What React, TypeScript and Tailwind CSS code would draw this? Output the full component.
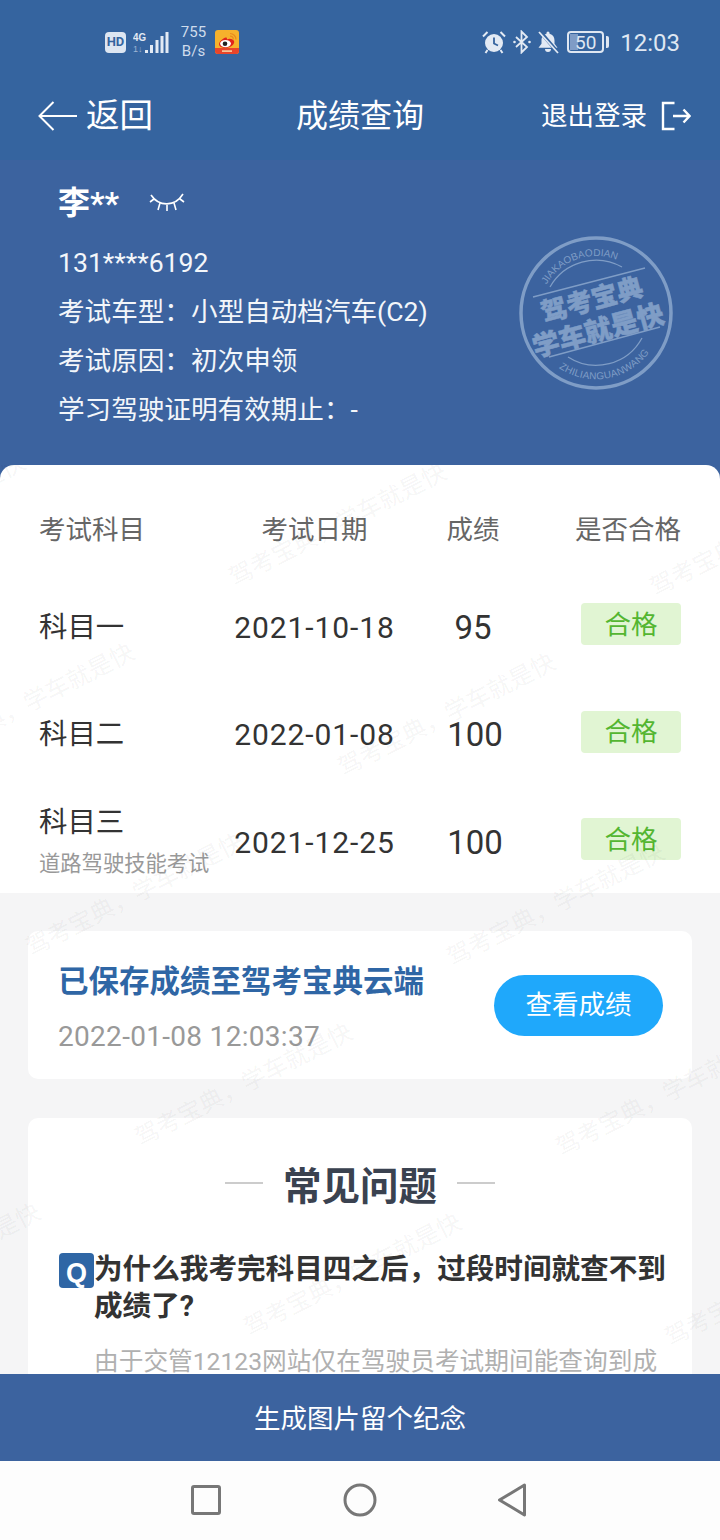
import React from "react";

const WM_A = { x: 109, y: 190 };
const WM_B = { x: 421, y: 10 };
const WATERMARKS: { x: number; y: number }[] = [];
for (let b = -2; b <= 2; b++) {
  for (let a = -2; a <= 6; a++) {
    WATERMARKS.push({ x: 236 + a * WM_A.x + b * WM_B.x, y: 590 + a * WM_A.y + b * WM_B.y });
  }
}

function StatusBar() {
  return (
    <div className="flex h-[84px] items-center pl-[105px] pr-[40px] text-[#dfe7f2]">
      <div className="flex h-[21px] w-[21px] items-center justify-center rounded-[4px] bg-[#dde6f2] text-[13px] font-bold text-[#35649f]">HD</div>
      <svg className="ml-[7px]" width="39" height="24" viewBox="0 0 39 24">
        <text x="0" y="11" fontSize="11.5" fontWeight="700" fill="#e3eaf4" fontFamily="Liberation Sans" textLength="13" lengthAdjust="spacingAndGlyphs">4G</text>
        <text x="0" y="22" fontSize="9" fill="#9db4d3" fontFamily="Liberation Sans">1↓</text>
        <g fill="#e3eaf4">
          <rect x="12" y="20" width="3" height="3" />
          <rect x="17" y="15" width="3" height="8" />
          <rect x="22.5" y="10" width="3" height="13" />
          <rect x="27.5" y="6" width="3" height="17" />
          <rect x="32.5" y="2" width="3" height="21" />
        </g>
      </svg>
      <div className="ml-[8px] flex w-[27px] flex-col items-center text-[15px] leading-[19px] text-[#cfdcec]">
        <span>755</span>
        <span>B/s</span>
      </div>
      <svg className="ml-[8px]" width="24" height="24" viewBox="0 0 24 24">
        <rect width="24" height="24" rx="3" fill="#f6b12c" />
        <path d="M0 18h24v3a3 3 0 0 1-3 3H3a3 3 0 0 1-3-3z" fill="#e8452a" />
        <path d="M17.5 9.500c2 1 2.500 3.500 0 5.800-3 2.700-7.500 3.500-11 2-3-1.300-3.200-4-.8-6.500 2.400-2.600 5-4 6-3 .5.600.2 1.600.2 1.600 1.800-.8 4-.9 5.600.100z" fill="#e0261c" />
        <ellipse cx="10.500" cy="13.600" rx="5.400" ry="3.700" fill="#fff" />
        <circle cx="10" cy="13.800" r="2.300" fill="#222" />
        <path d="M15 3.500a6 6 0 0 1 6 6M15 6.200a3.300 3.300 0 0 1 3.300 3.300" fill="none" stroke="#e98a1e" strokeWidth="1.200" />
        <rect x="7" y="20.300" width="10" height="1.600" fill="#f9d0a0" />
      </svg>
      <div className="flex-1" />
      <svg width="24" height="24" viewBox="0 0 24 24">
        <circle cx="12" cy="13" r="9" fill="#e3eaf4" />
        <path d="M12 7.500V13.500L16 15.500" fill="none" stroke="#35649f" strokeWidth="1.800" />
        <path d="M1 6.500 5.500 2M23 6.500 18.500 2M5.500 20 3.500 23M18.500 20l2 3" stroke="#e3eaf4" strokeWidth="2" fill="none" />
      </svg>
      <svg className="ml-[7px]" width="18" height="24" viewBox="0 0 18 24">
        <path d="M3 7 14 17 8.500 22.500V1.500L14 7 3 17" fill="none" stroke="#e3eaf4" strokeWidth="1.800" />
        <circle cx="1.500" cy="12" r="1.300" fill="#e3eaf4" />
        <circle cx="16.500" cy="12" r="1.300" fill="#e3eaf4" />
      </svg>
      <svg className="ml-[6px]" width="22" height="24" viewBox="0 0 22 24">
        <path d="M11 1.500a1.500 1.500 0 0 1 1.500 1.500v.7c3.500.8 5 3.500 5 7v3l3 4H1.500l3-4v-3c0-3.500 1.500-6.200 5-7V3A1.500 1.500 0 0 1 11 1.500zM8 19h6a3 3 0 0 1-6 0z" fill="#e3eaf4" />
        <path d="M3 1.500 21 22.500" stroke="#35649f" strokeWidth="3.500" />
        <path d="M2 2 21 23" stroke="#e3eaf4" strokeWidth="1.800" />
      </svg>
      <div className="relative ml-[8px] flex h-[22px] w-[37px] items-center justify-center overflow-hidden rounded-[4px] border-2 border-[#dfe7f2] text-[19px] leading-none">
        <div className="absolute bottom-[1px] left-[1px] top-[1px] w-[8px] bg-[#7f9cc6]" />
        <span className="relative">50</span>
      </div>
      <div className="ml-[2px] h-[12px] w-[3px] rounded-r-[2px] bg-[#dfe7f2]" />
      <div className="ml-[11px] pt-[2px] text-[24px] leading-none">12:03</div>
    </div>
  );
}

function NavBar() {
  return (
    <div className="relative flex h-[76px] items-center justify-between pb-[12px] pl-[38px] pr-[29px] text-white">
      <div className="flex items-center">
        <svg width="39" height="30" viewBox="0 0 39 30">
          <path d="M39 15H2M15.500 1 1.500 15 15.500 29" fill="none" stroke="#fff" strokeWidth="2" />
        </svg>
        <span className="ml-[9px] text-[33.500px] leading-none">返回</span>
      </div>
      <span className="absolute left-[296px] top-[12px] text-[32px] leading-[40px]">成绩查询</span>
      <div className="flex items-center">
        <span className="text-[26.5px] leading-none">退出登录</span>
        <svg className="ml-[14px]" width="30" height="30" viewBox="0 0 30 30">
          <path d="M13.500 2H2V28H13.500M12 15H28M22.500 8.500 28.500 15 22.500 21.500" fill="none" stroke="#fff" strokeWidth="2.400" />
        </svg>
      </div>
    </div>
  );
}

function Stamp() {
  return (
    <svg className="absolute left-[516px] top-[73px]" width="160" height="160" viewBox="0 0 160 160">
      <g fill="none" stroke="#7f9dc6">
        <circle cx="80" cy="80" r="75" strokeWidth="3.500" />
        <path d="M17 64 129 35M33 124 144 94" strokeWidth="1.300" />
        <path d="M34 54A53 53 0 0 1 106 34M52 124A52 52 0 0 0 126 105" strokeWidth="1.300" />
      </g>
      <defs>
        <path id="stamp-top" d="M30.600 51.500A57 57 0 0 1 123.700 43.400" />
        <path id="stamp-bottom" d="M43 135A66 66 0 0 0 145 91.500" />
      </defs>
      <text fill="#7f9dc6" fontSize="10" fontFamily="Liberation Sans">
        <textPath href="#stamp-top">JIAKAOBAODIAN</textPath>
      </text>
      <text fill="#7f9dc6" fontSize="10" fontFamily="Liberation Sans" letterSpacing="0.200">
        <textPath href="#stamp-bottom">ZHILIANGUANWANG</textPath>
      </text>
      <g fill="#7f9dc6" fontFamily="Noto Sans CJK SC" fontWeight="900" textAnchor="middle" stroke="#7f9dc6" strokeWidth="0.500">
        <text x="76" y="76" fontSize="26" transform="rotate(-15 76 67)">驾考宝典</text>
        <text x="82" y="107" fontSize="27" transform="rotate(-15 82 97)">学车就是快</text>
      </g>
    </svg>
  );
}

function UserInfo() {
  return (
    <div className="relative h-[305px] bg-[#3c639f] pl-[58px] text-white">
      <div className="flex h-[78px] items-center pt-[8px]">
        <span className="text-[32px] font-bold leading-none">李**</span>
        <svg className="ml-[30px]" width="36" height="24" viewBox="0 0 36 24">
          <path d="M2 4C10 16 26 16 34 3M11 12 9 19M18 14V20M25 12 27 19M5 8 1 11M31 8 35 11" fill="none" stroke="#fff" strokeWidth="1.600" />
        </svg>
      </div>
      <div className="text-[26.600px] leading-[49px] text-[#f3f6fa]">
        <div>131****6192</div>
        <div>考试车型：小型自动档汽车(C2)</div>
        <div>考试原因：初次申领</div>
        <div>学习驾驶证明有效期止：-</div>
      </div>
      <Stamp />
    </div>
  );
}

function Badge() {
  return (
    <div className="mb-[4.5px] flex h-[42px] w-[100px] items-center justify-center rounded-[4px] bg-[#e1f5d3] pt-[2px] text-[26.5px] leading-none text-[#54b631]">合格</div>
  );
}

function ScoreRow({ name, sub, date, score }: { name: string; sub?: string; date: string; score: string }) {
  return (
    <div className="grid h-[107.300px] grid-cols-[195px_161px_156px_130px] items-center">
      <div className="relative pt-[3px] text-[28.400px] leading-[40px] text-[#333]">
        {sub ? (
          <div className="-mt-[40px]">
            {name}
            <div className="absolute left-0 top-[4px] whitespace-nowrap text-[21.300px] leading-[40px] text-[#999]">{sub}</div>
          </div>
        ) : (
          name
        )}
      </div>
      <div className="pt-[3px] text-center text-[30px] leading-[40px] tracking-[0.9px] text-[#333]">{date}</div>
      <div className={score.length > 2 ? "pl-[4px] pt-[3px] text-center text-[33px] leading-[40px] text-[#333]" : "pt-[3px] text-center text-[33px] leading-[40px] text-[#333]"}>{score}</div>
      <div className="flex justify-end">
        <Badge />
      </div>
    </div>
  );
}

function ScoreCard() {
  return (
    <div className="h-[428px] rounded-t-[14px] bg-white px-[39px]">
      <div className="grid h-[108px] grid-cols-[195px_161px_156px_130px] items-center pt-[22px] text-[26.500px] text-[#666]">
        <div>考试科目</div>
        <div className="text-center">考试日期</div>
        <div className="text-center">成绩</div>
        <div className="text-right">是否合格</div>
      </div>
      <ScoreRow name="科目一" date="2021-10-18" score="95" />
      <ScoreRow name="科目二" date="2022-01-08" score="100" />
      <ScoreRow name="科目三" sub="道路驾驶技能考试" date="2021-12-25" score="100" />
    </div>
  );
}

function SavedCard() {
  return (
    <div className="flex h-[148px] items-center justify-between rounded-[10px] bg-white pl-[30px] pr-[29px]">
      <div className="mt-[7px]">
        <div className="whitespace-nowrap text-[30.500px] font-bold leading-[40px] text-[#2f66a5]">已保存成绩至驾考宝典云端</div>
        <div className="mt-[17px] text-[28px] leading-[36px] tracking-[0.3px] text-[#999]">2022-01-08 12:03:37</div>
      </div>
      <div className="flex h-[61px] w-[169px] items-center justify-center rounded-full bg-[#1fa8fb] text-[26.500px] text-white">查看成绩</div>
    </div>
  );
}

function FaqCard() {
  return (
    <div className="mt-[39px] h-[300px] rounded-t-[10px] bg-white pl-[31px] pr-[24px]">
      <div className="flex items-center justify-center pr-[7px] pt-[39px]">
        <div className="mb-[4px] h-[2px] w-[38px] bg-[#ccc]" />
        <div className="mx-[20px] pt-[4px] text-[38.500px] font-bold leading-[52px] text-[#3a4250]">常见问题</div>
        <div className="mb-[4px] h-[2px] w-[38px] bg-[#ccc]" />
      </div>
      <div className="mt-[35px] flex">
        <div className="mt-[5px] flex h-[35px] w-[35px] shrink-0 items-end justify-center rounded-[4px] bg-[#2f66a5] font-['Liberation_Sans'] text-[27px] font-bold leading-[29px] text-white">Q</div>
        <div className="mt-[3px] text-[28.600px] font-bold leading-[37px] text-[#333]">为什么我考完科目四之后，过段时间就查不到成绩了?</div>
      </div>
      <div className="mt-[17px] whitespace-nowrap pl-[35px] text-[24.700px] leading-[40px] text-[#b0b0b0]">由于交管12123网站仅在驾驶员考试期间能查询到成</div>
    </div>
  );
}

function Watermarks() {
  return (
    <div className="pointer-events-none absolute inset-0 z-10 overflow-hidden">
      {WATERMARKS.map((w) => (
        <div
          key={`${w.x}-${w.y}`}
          className="absolute origin-bottom-left -rotate-[27deg] whitespace-nowrap text-[24px] leading-[24px] text-black/[0.055]"
          style={{ left: w.x, top: w.y - 465 - 24 }}
        >
          驾考宝典，学车就是快
        </div>
      ))}
    </div>
  );
}

export default function App() {
  return (
    <div className="flex h-[1540px] w-[720px] flex-col overflow-hidden bg-white font-[Roboto,'Noto_Sans_CJK_SC',sans-serif]">
      <div className="h-[160px] bg-[#35649f]">
        <StatusBar />
        <NavBar />
      </div>
      <UserInfo />
      <div className="relative h-[909px] overflow-hidden bg-[#3c639f]">
        <ScoreCard />
        <div className="h-[481px] bg-[#f5f5f6] px-[28px] pt-[38px]">
          <SavedCard />
          <FaqCard />
        </div>
        <Watermarks />
      </div>
      <div className="flex h-[87px] items-center justify-center bg-[#3c639f] pt-[3px] text-[26.500px] text-white">生成图片留个纪念</div>
      <div className="flex h-[79px] items-center bg-[#fdfdfd] pb-[1px] pl-[191px]">
        <svg width="30" height="30" viewBox="0 0 30 30">
          <rect x="1.500" y="1.500" width="27" height="27" rx="1.500" fill="none" stroke="#777" strokeWidth="3" />
        </svg>
        <svg className="ml-[122px]" width="34" height="34" viewBox="0 0 34 34">
          <circle cx="17" cy="17" r="15" fill="none" stroke="#777" strokeWidth="3" />
        </svg>
        <svg className="ml-[120px]" width="30" height="34" viewBox="0 0 30 34">
          <path d="M27.500 2 2.500 17 27.500 32Z" fill="none" stroke="#777" strokeWidth="3" strokeLinejoin="round" />
        </svg>
      </div>
    </div>
  );
}
